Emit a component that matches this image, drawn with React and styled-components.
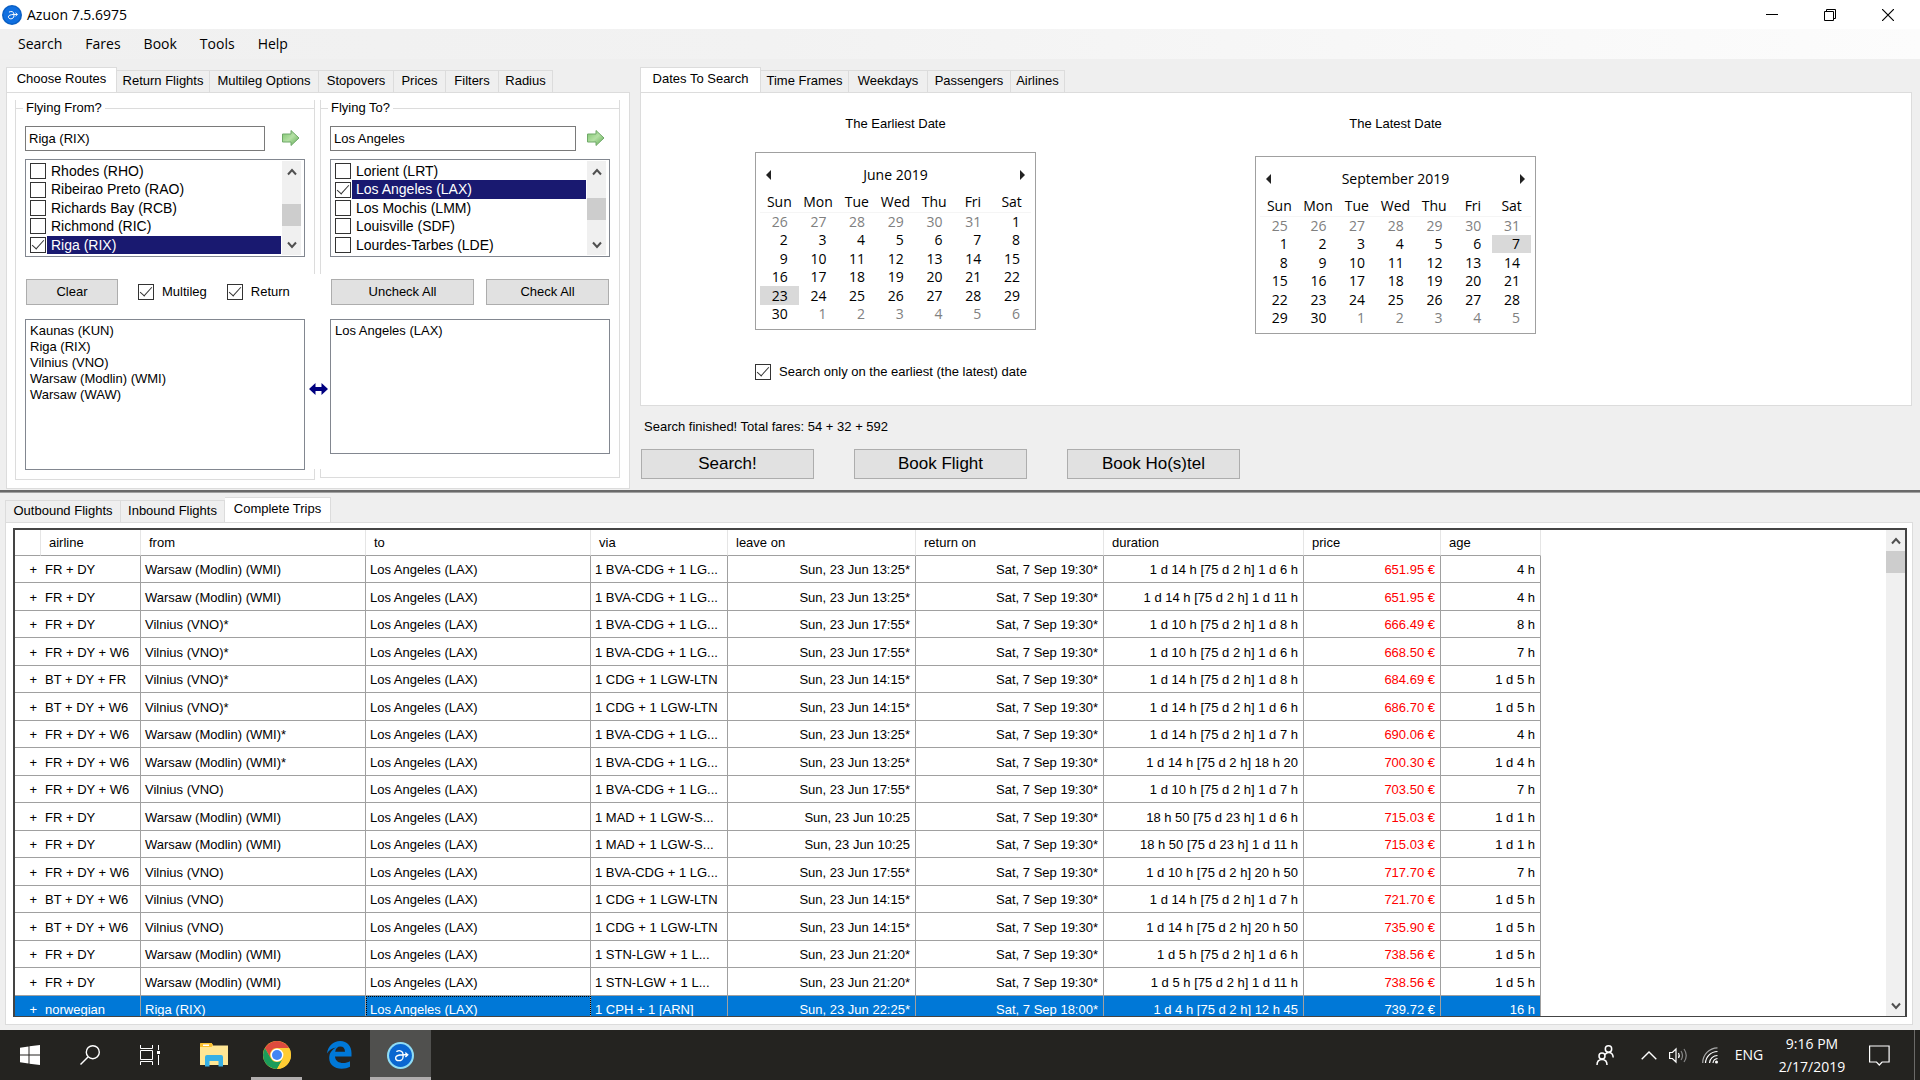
import React, { useState } from "react";
import styled, { createGlobalStyle } from "styled-components";

const colors = {
  face: "#efefef",
  line: "#dcdcdc",
  field: "#828790",
  button: "#e1e1e1",
  buttonLine: "#adadad",
  navy: "#191970",
  select: "#0078d7",
  taskbar: "#242320",
};

const sans = `"Liberation Sans", Arial, sans-serif`;
const ui = `"Open Sans", "Segoe UI", sans-serif`;

const GlobalStyle = createGlobalStyle`
  * { box-sizing: border-box; }
  body {
    margin: 0;
    background: ${colors.face};
    color: #000;
    font-family: ${sans};
    font-size: 13px;
    line-height: 16px;
  }
  button, input, select {
    margin: 0;
    font: inherit;
    color: inherit;
  }
`;

const Desktop = styled.div`
  display: flex;
  flex-direction: column;
  height: 100vh;
  overflow: hidden;
`;

/* title bar and menu */

const TitleBar = styled.header`
  flex: none;
  display: flex;
  align-items: center;
  height: 29px;
  padding: 0 3px 0 2px;
  background: #fff;
  font-family: ${ui};
  font-size: 14px;
`;

const Title = styled.span`
  flex: 1;
  padding-left: 5px;
`;

const WindowButton = styled.button`
  display: flex;
  align-items: center;
  justify-content: center;
  width: 58px;
  height: 29px;
  padding: 0;
  border: 0;
  background: none;
`;

const MenuBar = styled.nav`
  flex: none;
  display: flex;
  align-items: center;
  height: 30px;
  padding-left: 7px;
  background: linear-gradient(90deg, #f0f0f0, #f2f2f2 40%, #fcfcfc);
`;

const MenuItem = styled.button`
  padding: 0 12px 0 11px;
  border: 0;
  background: none;
  font-family: ${ui};
  font-size: 14px;
  line-height: 24px;
`;

/* tabs */

const TabList = styled.div`
  display: flex;
  align-items: flex-end;
  height: 26px;
  margin-bottom: -1px;
`;

const Tab = styled.button`
  width: ${({ $width }) => $width}px;
  height: ${({ $active }) => ($active ? "26px" : "23px")};
  padding: ${({ $active }) => ($active ? "0 0 2px" : "0 0 1px")};
  border: 1px solid ${colors.line};
  border-left-width: ${({ $first }) => ($first ? "1px" : "0")};
  border-bottom-color: ${({ $active }) => ($active ? "#fff" : colors.line)};
  background: ${({ $active }) => ($active ? "#fff" : colors.face)};
  white-space: nowrap;
`;

const TabPanel = styled.section`
  flex: 1;
  min-height: 0;
  border: 1px solid ${colors.line};
  background: #fff;
`;

/* upper half */

const Upper = styled.div`
  flex: none;
  display: flex;
  gap: 10px;
  height: 431px;
  padding: 8px 8px 1px 6px;
`;

const RoutesPane = styled.div`
  flex: none;
  display: flex;
  flex-direction: column;
  width: 624px;
`;

const DatesPane = styled.div`
  flex: 1;
  display: flex;
  flex-direction: column;
`;

const RoutesPanel = styled(TabPanel)`
  display: grid;
  grid-template-columns: 300px 300px;
  column-gap: 5px;
  align-items: start;
  padding: 7px 8px;
  position: relative;
`;

const Group = styled.div`
  display: flex;
  flex-direction: column;
`;

const GroupTop = styled.div`
  height: 174px;
  padding: 0 9px;
  border: 1px solid ${colors.line};
  border-width: 0 1px;
`;

const Legend = styled.h2`
  display: flex;
  align-items: center;
  gap: 3px;
  margin: 0 -9px;
  font-size: 13px;
  font-weight: 400;
  line-height: 16px;
  &::before,
  &::after {
    content: "";
    height: 1px;
    background: ${colors.line};
  }
  &::before {
    width: 7px;
  }
  &::after {
    flex: 1;
  }
`;

const GroupMiddle = styled.div`
  height: 195px;
  padding: 5px 9px 0;
  border: 0 solid ${colors.line};
  border-left-width: ${({ $edge }) => ($edge === "left" ? "1px" : "0")};
  border-right-width: ${({ $edge }) => ($edge === "right" ? "1px" : "0")};
  padding-left: ${({ $edge }) => ($edge === "left" ? "9px" : "10px")};
`;

const GroupBottom = styled.div`
  height: ${({ $height }) => $height}px;
  border: 1px solid ${colors.line};
  border-top: 0;
`;

const SearchLine = styled.div`
  display: flex;
  align-items: center;
  justify-content: space-between;
  margin-top: 10px;
  padding-right: 4px;
`;

const AirportInput = styled.input`
  width: ${({ $width }) => $width}px;
  height: 25px;
  padding: 0 3px;
  border: 1px solid #7a7a7a;
  background: #fff;
`;

const GoButton = styled.button`
  display: flex;
  padding: 0 0 2px;
  border: 0;
  background: none;
`;

const CheckList = styled.div`
  display: flex;
  width: 280px;
  height: 98px;
  margin-top: 8px;
  padding: 1px 3px 1px 1px;
  border: 1px solid ${colors.field};
`;

const CheckRows = styled.div`
  flex: 1;
  display: grid;
  grid-template-rows: repeat(5, 1fr);
  padding: 1px 1px 1px 3px;
`;

const CheckRow = styled.label`
  display: flex;
  align-items: center;
  gap: 1px;
  font-size: 14px;
`;

const CheckText = styled.span`
  flex: 1;
  align-self: stretch;
  padding: 1px 0 0 4px;
  background: ${({ $selected }) => ($selected ? colors.navy : "none")};
  color: ${({ $selected }) => ($selected ? "#fff" : "#000")};
`;

const CheckBox = styled.input`
  flex: none;
  display: grid;
  place-items: center;
  appearance: none;
  width: 16px;
  height: 16px;
  border: 1px solid #333;
  background: #fff;
  &:checked::after {
    content: "";
    width: 11px;
    height: 5px;
    margin-bottom: 4px;
    border: solid #333;
    border-width: 0 0 1px 1px;
    transform: rotate(-48deg);
  }
`;

const Buttons = styled.div`
  display: flex;
  align-items: center;
  gap: ${({ $gap }) => $gap}px;
  padding-left: 1px;
`;

const Button = styled.button`
  width: ${({ $width }) => $width}px;
  height: 26px;
  padding: 0;
  border: 1px solid ${colors.buttonLine};
  background: ${colors.button};
`;

const Option = styled.label`
  display: flex;
  align-items: center;
  gap: 8px;
`;

const ListBox = styled.select`
  display: block;
  appearance: none;
  width: 280px;
  height: ${({ $height }) => $height}px;
  margin-top: 14px;
  padding: 3px 2px;
  border: 1px solid ${colors.field};
  border-radius: 0;
  outline: 0;
  background: #fff;
  overflow: hidden;
  option {
    min-height: 16px;
    padding: 0 2px;
    line-height: 16px;
  }
`;

const SwapMark = styled.svg`
  position: absolute;
  left: 302px;
  top: 290px;
`;

/* scroll bars */

const Scroller = styled.div`
  flex: none;
  display: flex;
  flex-direction: column;
  justify-content: space-between;
  width: 19px;
  background: #f0f0f0;
`;

const ScrollButton = styled.button`
  display: flex;
  align-items: center;
  justify-content: center;
  height: 21px;
  padding: 0;
  border: 0;
  background: none;
`;

const ScrollTrack = styled.div`
  flex: 1;
  padding-top: ${({ $offset }) => $offset}px;
`;

const ScrollThumb = styled.div`
  height: 22px;
  background: #cdcdcd;
`;

/* dates */

const DatesPanel = styled(TabPanel)`
  flex: none;
  height: 314px;
  padding: 23px 0 0 114px;
`;

const Calendars = styled.div`
  display: flex;
  gap: 219px;
`;

const CalendarColumn = styled.div`
  width: 281px;
`;

const CalendarTitle = styled.h2`
  margin: 0 0 ${({ $gap }) => $gap}px;
  font-size: 13px;
  font-weight: 400;
  line-height: 16px;
  text-align: center;
`;

const CalendarBox = styled.div`
  height: 178px;
  padding: 12px 4px 0;
  border: 1px solid #a0a0a0;
  font-family: ${ui};
  font-size: 14px;
`;

const MonthLine = styled.div`
  display: flex;
  align-items: center;
  justify-content: space-between;
  height: 20px;
  padding: 0 5px;
`;

const MonthButton = styled.button`
  display: flex;
  padding: 0;
  border: 0;
  background: none;
`;

const Days = styled.table`
  width: 100%;
  margin-top: 8px;
  border-collapse: collapse;
  table-layout: fixed;
  th {
    height: 19px;
    padding: 0;
    border-bottom: 1px solid #f5f5f5;
    font-weight: 400;
    line-height: 18px;
  }
  td {
    height: 18px;
  }
  tr:nth-child(odd) td {
    height: 19px;
  }
`;

const Day = styled.td`
  padding: 0 11px 0 0;
  background: ${({ $selected }) => ($selected ? "#d9d9d9" : "none")};
  color: ${({ $faded }) => ($faded ? "#808080" : "#000")};
  line-height: 18px;
  text-align: right;
`;

const DateOption = styled(Option)`
  width: max-content;
  margin-top: 30px;
`;

const Status = styled.p`
  margin: 13px 0 0 4px;
`;

const Actions = styled.div`
  display: flex;
  gap: 40px;
  margin-top: 14px;
  padding-left: 1px;
`;

const ActionButton = styled.button`
  width: 173px;
  height: 30px;
  padding: 0;
  border: 1px solid ${colors.buttonLine};
  background: ${colors.button};
  font-size: 17px;
`;

const Splitter = styled.div`
  flex: none;
  height: 3px;
  border: solid #a0a0a0;
  border-width: 0 0 1px;
  background: #696969;
`;

/* trips */

const Lower = styled.div`
  flex: 1;
  display: flex;
  flex-direction: column;
  min-height: 0;
  padding: 4px 7px 5px 5px;
`;

const TripsPanel = styled(TabPanel)`
  display: flex;
  padding: 5px 5px 7px 7px;
`;

const Grid = styled.div`
  flex: 1;
  display: flex;
  justify-content: space-between;
  border: 2px solid #444;
  border-width: 2px 2px 1px;
  overflow: hidden;
`;

const Trips = styled.table`
  width: 1526px;
  border-spacing: 0;
  table-layout: fixed;
`;

const HeadCell = styled.th`
  height: 26px;
  padding: 0 8px;
  border-right: 1px solid #e5e5e5;
  border-bottom: 1px solid #a0a0a0;
  font-weight: 400;
  text-align: left;
`;

const Cell = styled.td`
  padding: 2px 5px 0 4px;
  border: solid #a0a0a0;
  border-width: 0 1px 1px 0;
  color: ${({ $price }) => ($price ? "#f00" : "inherit")};
  text-align: ${({ $right }) => ($right ? "right" : "left")};
  white-space: nowrap;
  overflow: hidden;
  text-overflow: ellipsis;
`;

const ExpandCell = styled(Cell)`
  padding: 2px 4px 0;
  border-right: 0;
  text-align: right;
`;

const TripRow = styled.tr`
  height: 28px;
  background: ${({ $selected }) => ($selected ? colors.select : "#fff")};
  color: ${({ $selected }) => ($selected ? "#fff" : "#000")};
  &:nth-child(odd) {
    height: 27px;
  }
  ${Cell} {
    ${({ $selected }) => $selected && "color: #fff;"}
  }
  ${Cell}:nth-child(4) {
    ${({ $selected }) =>
      $selected && "outline: 1px dotted #000; outline-offset: -1px;"}
  }
`;

/* taskbar */

const Taskbar = styled.footer`
  flex: none;
  display: flex;
  justify-content: space-between;
  height: 50px;
  background: ${colors.taskbar};
  color: #fff;
  font-family: ${ui};
  font-size: 14px;
`;

const TaskGroup = styled.div`
  display: flex;
  align-items: stretch;
`;

const TaskButton = styled.button`
  display: flex;
  align-items: center;
  justify-content: center;
  width: ${({ $width }) => $width || 60}px;
  padding: 0;
  border: 0;
  background: ${({ $active }) => ($active ? "#50504e" : "none")};
  box-shadow: ${({ $active }) => ($active ? "inset 0 -3px #b0adad" : "none")};
`;

const RunningButton = styled(TaskButton)`
  margin: 0 5px 0 3px;
  box-shadow: inset 0 -3px #b0adad;
`;

const Clock = styled.time`
  display: flex;
  flex-direction: column;
  justify-content: center;
  width: 86px;
  line-height: 23px;
  text-align: center;
`;

const Notifications = styled(TaskButton)`
  margin-right: 11px;
`;

const ShowDesktop = styled(TaskButton)`
  border-left: 1px solid #6b6a68;
`;

const routeTabs = [
  ["Choose Routes", 111],
  ["Return Flights", 93],
  ["Multileg Options", 109],
  ["Stopovers", 75],
  ["Prices", 52],
  ["Filters", 53],
  ["Radius", 54],
];

const dateTabs = [
  ["Dates To Search", 121],
  ["Time Frames", 88],
  ["Weekdays", 79],
  ["Passengers", 83],
  ["Airlines", 54],
];

const tripTabs = [
  ["Outbound Flights", 116],
  ["Inbound Flights", 104],
  ["Complete Trips", 106],
];

const fromAirports = [
  ["Rhodes (RHO)"],
  ["Ribeirao Preto (RAO)"],
  ["Richards Bay (RCB)"],
  ["Richmond (RIC)"],
  ["Riga (RIX)", true],
];

const toAirports = [
  ["Lorient (LRT)"],
  ["Los Angeles (LAX)", true],
  ["Los Mochis (LMM)"],
  ["Louisville (SDF)"],
  ["Lourdes-Tarbes (LDE)"],
];

const columns = [
  ["", 26],
  ["airline", 100],
  ["from", 225],
  ["to", 225],
  ["via", 137],
  ["leave on", 188],
  ["return on", 188],
  ["duration", 200],
  ["price", 137],
  ["age", 100],
];

const WMI = "Warsaw (Modlin) (WMI)";
const VNO = "Vilnius (VNO)";
const BVA = "1 BVA-CDG + 1 LG...";
const CDG = "1 CDG + 1 LGW-LTN";
const MAD = "1 MAD + 1 LGW-S...";
const STN = "1 STN-LGW + 1 L...";

const trips = [
  ["FR + DY", WMI, BVA, "13:25*", "1 d 14 h [75 d 2 h] 1 d 6 h", "651.95", "4 h"],
  ["FR + DY", WMI, BVA, "13:25*", "1 d 14 h [75 d 2 h] 1 d 11 h", "651.95", "4 h"],
  ["FR + DY", VNO + "*", BVA, "17:55*", "1 d 10 h [75 d 2 h] 1 d 8 h", "666.49", "8 h"],
  ["FR + DY + W6", VNO + "*", BVA, "17:55*", "1 d 10 h [75 d 2 h] 1 d 6 h", "668.50", "7 h"],
  ["BT + DY + FR", VNO + "*", CDG, "14:15*", "1 d 14 h [75 d 2 h] 1 d 8 h", "684.69", "1 d 5 h"],
  ["BT + DY + W6", VNO + "*", CDG, "14:15*", "1 d 14 h [75 d 2 h] 1 d 6 h", "686.70", "1 d 5 h"],
  ["FR + DY + W6", WMI + "*", BVA, "13:25*", "1 d 14 h [75 d 2 h] 1 d 7 h", "690.06", "4 h"],
  ["FR + DY + W6", WMI + "*", BVA, "13:25*", "1 d 14 h [75 d 2 h] 18 h 20", "700.30", "1 d 4 h"],
  ["FR + DY + W6", VNO, BVA, "17:55*", "1 d 10 h [75 d 2 h] 1 d 7 h", "703.50", "7 h"],
  ["FR + DY", WMI, MAD, "10:25", "18 h 50 [75 d 23 h] 1 d 6 h", "715.03", "1 d 1 h"],
  ["FR + DY", WMI, MAD, "10:25", "18 h 50 [75 d 23 h] 1 d 11 h", "715.03", "1 d 1 h"],
  ["FR + DY + W6", VNO, BVA, "17:55*", "1 d 10 h [75 d 2 h] 20 h 50", "717.70", "7 h"],
  ["BT + DY + W6", VNO, CDG, "14:15*", "1 d 14 h [75 d 2 h] 1 d 7 h", "721.70", "1 d 5 h"],
  ["BT + DY + W6", VNO, CDG, "14:15*", "1 d 14 h [75 d 2 h] 20 h 50", "735.90", "1 d 5 h"],
  ["FR + DY", WMI, STN, "21:20*", "1 d 5 h [75 d 2 h] 1 d 6 h", "738.56", "1 d 5 h"],
  ["FR + DY", WMI, STN, "21:20*", "1 d 5 h [75 d 2 h] 1 d 11 h", "738.56", "1 d 5 h"],
  ["norwegian", "Riga (RIX)", "1 CPH + 1 [ARN]", "22:25*", "1 d 4 h [75 d 2 h] 12 h 45", "739.72", "16 h", "18:00*"],
];

const AzuonLogo = ({ size, ring }) => (
  <svg width={size} height={size} viewBox="0 0 26 26" aria-hidden="true">
    <circle cx="13" cy="13" r="13" fill={ring ? "#8fdcf5" : "#0a5fc4"} />
    <circle cx="13" cy="13" r="11" fill={ring ? "#0a66d0" : "#0f6fe0"} />
    <path
      d="M9.500 9c2.500-1.400 6-.4 6 3v2.300c0 2.200-2 3.700-4 3.700s-3.200-1.200-3.200-2.600c0-2 3-3 7.200-3.100h4M18 10.500l2 1.800-2 1.800"
      fill="none"
      stroke="#fff"
      strokeWidth="1.300"
      strokeLinecap="round"
    />
  </svg>
);

const GreenArrow = () => (
  <svg width="20" height="18" viewBox="0 0 20 18" aria-hidden="true">
    <defs>
      <linearGradient id="go" x1="0" x2="1" y1="0" y2="1">
        <stop offset="0" stopColor="#7cc46c" />
        <stop offset="0.500" stopColor="#b4e0a4" />
        <stop offset="1" stopColor="#5aa84e" />
      </linearGradient>
    </defs>
    <path
      d="M1.500 5h8.500V1.500l8 7.500-8 7.500V13H1.500z"
      fill="url(#go)"
      stroke="#6fa868"
    />
  </svg>
);

const Chevron = ({ down }) => (
  <svg width="10" height="8" viewBox="0 0 10 8" aria-hidden="true">
    <path
      d={down ? "M1 1.500 5 6 9 1.500" : "M1 6.500 5 2 9 6.500"}
      fill="none"
      stroke="#505050"
      strokeWidth="2"
    />
  </svg>
);

function ScrollBar({ offset }) {
  return (
    <Scroller>
      <ScrollButton aria-label="Scroll up">
        <Chevron />
      </ScrollButton>
      <ScrollTrack $offset={offset}>
        <ScrollThumb />
      </ScrollTrack>
      <ScrollButton aria-label="Scroll down">
        <Chevron down />
      </ScrollButton>
    </Scroller>
  );
}

function Tabs({ tabs, initial = 0 }) {
  const [active, setActive] = useState(initial);
  return (
    <TabList role="tablist">
      {tabs.map(([name, width], i) => (
        <Tab
          key={name}
          role="tab"
          aria-selected={i === active}
          $width={width}
          $active={i === active}
          $first={i === 0}
          onClick={() => setActive(i)}
        >
          {name}
        </Tab>
      ))}
    </TabList>
  );
}

function AirportPicker({ title, value, width, airports, offset }) {
  return (
    <GroupTop>
      <Legend>{title}</Legend>
      <SearchLine>
        <AirportInput aria-label={title} defaultValue={value} $width={width} />
        <GoButton aria-label="Add airport">
          <GreenArrow />
        </GoButton>
      </SearchLine>
      <CheckList>
        <CheckRows>
          {airports.map(([name, checked]) => (
            <CheckRow key={name}>
              <CheckBox type="checkbox" defaultChecked={checked} />
              <CheckText $selected={checked}>{name}</CheckText>
            </CheckRow>
          ))}
        </CheckRows>
        <ScrollBar offset={offset} />
      </CheckList>
    </GroupTop>
  );
}

function Calendar({ title, month, first, length, previous, selected, gap }) {
  const cells = Array.from({ length: 42 }, (_, i) => {
    const day = i - first + 1;
    if (day < 1) return { day: previous + day, faded: true };
    if (day > length) return { day: day - length, faded: true };
    return { day, selected: day === selected };
  });
  return (
    <CalendarColumn>
      <CalendarTitle $gap={gap}>{title}</CalendarTitle>
      <CalendarBox>
        <MonthLine>
          <MonthButton aria-label="Previous month">
            <svg width="7" height="10" viewBox="0 0 7 10">
              <path d="M6 0v10L1 5z" fill="#222" />
            </svg>
          </MonthButton>
          {month}
          <MonthButton aria-label="Next month">
            <svg width="7" height="10" viewBox="0 0 7 10">
              <path d="M1 0v10l5-5z" fill="#222" />
            </svg>
          </MonthButton>
        </MonthLine>
        <Days>
          <thead>
            <tr>
              {["Sun", "Mon", "Tue", "Wed", "Thu", "Fri", "Sat"].map((d) => (
                <th key={d}>{d}</th>
              ))}
            </tr>
          </thead>
          <tbody>
            {[0, 1, 2, 3, 4, 5].map((week) => (
              <tr key={week}>
                {cells.slice(week * 7, week * 7 + 7).map((c, i) => (
                  <Day key={i} $faded={c.faded} $selected={c.selected}>
                    {c.day}
                  </Day>
                ))}
              </tr>
            ))}
          </tbody>
        </Days>
      </CalendarBox>
    </CalendarColumn>
  );
}

function RoutesTab() {
  return (
    <RoutesPanel>
      <Group>
        <AirportPicker
          title="Flying From?"
          value="Riga (RIX)"
          width={240}
          airports={fromAirports}
          offset={22}
        />
        <GroupMiddle $edge="left">
          <Buttons $gap={20}>
            <Button $width={92}>Clear</Button>
            <Option>
              <CheckBox type="checkbox" defaultChecked />
              Multileg
            </Option>
            <Option>
              <CheckBox type="checkbox" defaultChecked />
              Return
            </Option>
          </Buttons>
          <ListBox multiple $height={151} aria-label="Chosen departures">
            <option>Kaunas (KUN)</option>
            <option>Riga (RIX)</option>
            <option>Vilnius (VNO)</option>
            <option>Warsaw (Modlin) (WMI)</option>
            <option>Warsaw (WAW)</option>
          </ListBox>
        </GroupMiddle>
        <GroupBottom $height={11} />
      </Group>
      <Group>
        <AirportPicker
          title="Flying To?"
          value="Los Angeles"
          width={246}
          airports={toAirports}
          offset={16}
        />
        <GroupMiddle $edge="right">
          <Buttons $gap={12}>
            <Button $width={143}>Uncheck All</Button>
            <Button $width={123}>Check All</Button>
          </Buttons>
          <ListBox multiple $height={135} aria-label="Chosen destinations">
            <option>Los Angeles (LAX)</option>
          </ListBox>
        </GroupMiddle>
        <GroupBottom $height={9} />
      </Group>
      <SwapMark width="19" height="12" viewBox="0 0 19 12" aria-hidden="true">
        <path
          d="M0 6 6.500 0v4h6V0L19 6l-6.500 6V8h-6v4z"
          fill="#000080"
        />
      </SwapMark>
    </RoutesPanel>
  );
}

function TripsGrid() {
  return (
    <Grid>
      <Trips>
        <colgroup>
          {columns.map(([name, width]) => (
            <col key={name} width={width} />
          ))}
        </colgroup>
        <thead>
          <tr>
            {columns.map(([name]) => (
              <HeadCell key={name}>{name}</HeadCell>
            ))}
          </tr>
        </thead>
        <tbody>
          {trips.map(([airline, from, via, leave, duration, price, age, back], i) => (
            <TripRow key={i} $selected={i === 16}>
              <ExpandCell>+</ExpandCell>
              <Cell>{airline}</Cell>
              <Cell>{from}</Cell>
              <Cell>Los Angeles (LAX)</Cell>
              <Cell>{via}</Cell>
              <Cell $right>Sun, 23 Jun {leave}</Cell>
              <Cell $right>Sat, 7 Sep {back || "19:30*"}</Cell>
              <Cell $right>{duration}</Cell>
              <Cell $right $price>
                {price} €
              </Cell>
              <Cell $right>{age}</Cell>
            </TripRow>
          ))}
        </tbody>
      </Trips>
      <ScrollBar offset={0} />
    </Grid>
  );
}

function WindowsTaskbar() {
  return (
    <Taskbar>
      <TaskGroup>
        <TaskButton aria-label="Start">
          <svg width="20" height="20" viewBox="0 0 20 20" fill="#fff">
            <path d="M0 2.800 8.500 1.500v8H0zM9.500 1.300 20 0v9.500H9.500zM0 10.500h8.500v8L0 17.300zM9.500 10.500H20V20L9.500 18.700z" />
          </svg>
        </TaskButton>
        <TaskButton aria-label="Search">
          <svg width="20" height="20" viewBox="0 0 20 20" fill="none" stroke="#fff" strokeWidth="1.400">
            <circle cx="12.800" cy="7.200" r="6.500" />
            <path d="M8 12 .500 19.500" />
          </svg>
        </TaskButton>
        <TaskButton aria-label="Task view">
          <svg width="20" height="20" viewBox="0 0 20 20" fill="none" stroke="#fff">
            <path d="M.500 0v3.500h12V0M.500 20v-3.500h12V20M.500 5.500h12v9H.500zM18.500 0v5M18.500 10v10" />
            <path d="M17 6h3v3h-3z" fill="#fff" stroke="none" />
          </svg>
        </TaskButton>
        <TaskButton $width={68} aria-label="File Explorer">
          <svg width="28" height="24" viewBox="0 0 28 24">
            <path d="M0 1.500C0 .700.500 0 1.500 0h10L13 2.500h15V22H0z" fill="#ffe694" />
            <path d="M0 1.500C0 .700.500 0 1.500 0h10L13 2 11.500 4H0z" fill="#fbc02d" />
            <path d="M3 1.500h6v1.500H3z" fill="#fff" />
            <path d="M5 23.500V14q0-2 2-2h14q2 0 2 2v9.500h-4.500V18h-9v5.500z" fill="#36b0e6" />
          </svg>
        </TaskButton>
        <RunningButton $width={51} aria-label="Chrome">
          <svg width="28" height="28" viewBox="0 0 28 28">
            <circle cx="14" cy="14" r="14" fill="#fc3" />
            <path d="M1.900 7A14 14 0 0 1 26.100 7H14a7 7 0 0 0-6.100 10.500z" fill="#dd4b3e" />
            <path d="M1.900 7 7.900 17.500A7 7 0 0 0 20.100 17.500L14 28A14 14 0 0 1 1.900 7z" fill="#1b9c5a" />
            <path d="M20.100 17.500 14 28A14 14 0 0 0 26.100 7H14a7 7 0 0 1 6.100 10.500z" fill="#fc3" />
            <circle cx="14" cy="14" r="6.400" fill="#fff" />
            <circle cx="14" cy="14" r="5" fill="#4285f4" />
          </svg>
        </RunningButton>
        <TaskButton $width={63} aria-label="Edge">
          <svg width="26" height="28" viewBox="0 0 26 28">
            <path
              d="M1 12.400C2 5 7.300 0 14.200 0 21.300 0 25.500 5.200 25.500 12v3.500H9c.300 4.500 4 6.500 8 6.500 2.800 0 5-.700 7-1.800v5.600c-2.200 1.300-5 2-8.300 2C8.300 27.800 3.200 23.500 3.200 17c0-4.700 2.800-8.500 7-10.400C5.800 7 3 9.300 1 12.400zM9.200 10.800H19C19 7.300 17.200 5.500 14.300 5.500 11.500 5.500 9.600 7.500 9.200 10.800z"
              fill="#0078d7"
              fillRule="evenodd"
            />
          </svg>
        </TaskButton>
        <TaskButton $width={61} $active aria-label="Azuon">
          <AzuonLogo size={27} ring />
        </TaskButton>
      </TaskGroup>
      <TaskGroup>
        <TaskButton $width={52} aria-label="People">
          <svg width="18" height="20" viewBox="0 0 18 20" fill="none" stroke="#fff" strokeWidth="1.500">
            <circle cx="6" cy="11" r="3" />
            <path d="M1 20q0-5.500 5-5.500T11 20" />
            <circle cx="12.500" cy="4" r="3.200" />
            <path d="M9 9.500q1.500-2 3.500-2 4.500 0 4.700 5" />
          </svg>
        </TaskButton>
        <TaskButton $width={36} aria-label="Show hidden icons">
          <svg width="16" height="9" viewBox="0 0 16 9" fill="none" stroke="#fff" strokeWidth="1.400">
            <path d="M.700 8.300 8 1l7.300 7.300" />
          </svg>
        </TaskButton>
        <TaskButton $width={24} aria-label="Volume">
          <svg width="20" height="17" viewBox="0 0 20 17" fill="none" stroke="#fff" strokeWidth="1.200">
            <path d="M.600 5.500h2.800L7 2v13l-3.600-3.500H.600z" />
            <path d="M9.500 6q1.500 2.500 0 5" />
            <path d="M12 4q3 4.500 0 9M15 2q4.500 6.500 0 13" stroke="#888" />
          </svg>
        </TaskButton>
        <TaskButton $width={38} aria-label="Network">
          <svg width="17" height="17" viewBox="0 0 17 17" fill="none" stroke="#fff" strokeWidth="1.200">
            <path d="M3.500 16A12 12 0 0 1 15.500 4.500M7.500 16a8 8 0 0 1 8-7.500M11 16a5 5 0 0 1 4.500-4.500" />
            <path d="M.700 16A15 15 0 0 1 15.500.800" stroke="#aaa" />
            <circle cx="14.500" cy="15" r="1.500" fill="#fff" stroke="none" />
          </svg>
        </TaskButton>
        <TaskButton $width={40} aria-label="Input language">
          ENG
        </TaskButton>
        <Clock>
          <span>9:16 PM</span>
          <span>2/17/2019</span>
        </Clock>
        <Notifications $width={48} aria-label="Notifications">
          <svg width="21" height="21" viewBox="0 0 21 21" fill="none" stroke="#fff" strokeWidth="1.200">
            <path d="M.600 1h19.500v16h-7L10.300 20l-2.800-3H.600z" />
          </svg>
        </Notifications>
        <ShowDesktop $width={6} aria-label="Show desktop" />
      </TaskGroup>
    </Taskbar>
  );
}

export default function App() {
  return (
    <>
      <GlobalStyle />
      <Desktop>
        <TitleBar>
          <AzuonLogo size={20} />
          <Title>Azuon 7.5.6975</Title>
          <WindowButton aria-label="Minimize">
            <svg width="12" height="12" viewBox="0 0 12 12" stroke="#000">
              <path d="M0 5.500h12" />
            </svg>
          </WindowButton>
          <WindowButton aria-label="Restore">
            <svg width="12" height="12" viewBox="0 0 12 12" fill="none" stroke="#000">
              <path d="M.500 2.500h9v9h-9zM2.500 2.500v-2h9v9h-2" />
            </svg>
          </WindowButton>
          <WindowButton aria-label="Close">
            <svg width="12" height="12" viewBox="0 0 12 12" stroke="#000" strokeWidth="1.200">
              <path d="m0 0 12 12M12 0 0 12" />
            </svg>
          </WindowButton>
        </TitleBar>
        <MenuBar>
          {["Search", "Fares", "Book", "Tools", "Help"].map((name) => (
            <MenuItem key={name}>{name}</MenuItem>
          ))}
        </MenuBar>
        <Upper>
          <RoutesPane>
            <Tabs tabs={routeTabs} />
            <RoutesTab />
          </RoutesPane>
          <DatesPane>
            <Tabs tabs={dateTabs} />
            <DatesPanel>
              <Calendars>
                <Calendar
                  title="The Earliest Date"
                  month="June 2019"
                  first={6}
                  length={30}
                  previous={31}
                  selected={23}
                  gap={20}
                />
                <Calendar
                  title="The Latest Date"
                  month="September 2019"
                  first={7}
                  length={30}
                  previous={31}
                  selected={7}
                  gap={24}
                />
              </Calendars>
              <DateOption>
                <CheckBox type="checkbox" defaultChecked />
                Search only on the earliest (the latest) date
              </DateOption>
            </DatesPanel>
            <Status>Search finished! Total fares: 54 + 32 + 592</Status>
            <Actions>
              <ActionButton>Search!</ActionButton>
              <ActionButton>Book Flight</ActionButton>
              <ActionButton>Book Ho(s)tel</ActionButton>
            </Actions>
          </DatesPane>
        </Upper>
        <Splitter />
        <Lower>
          <Tabs tabs={tripTabs} initial={2} />
          <TripsPanel>
            <TripsGrid />
          </TripsPanel>
        </Lower>
        <WindowsTaskbar />
      </Desktop>
    </>
  );
}
